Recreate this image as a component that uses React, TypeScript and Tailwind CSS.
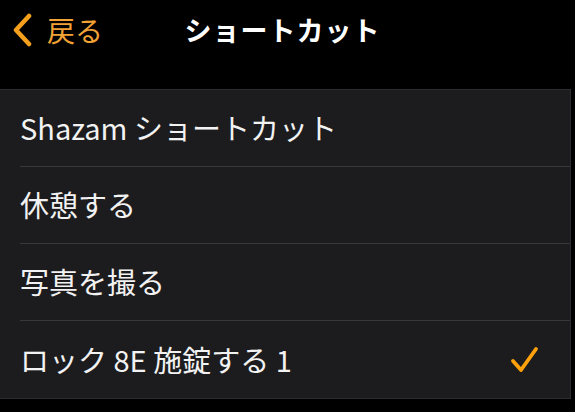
import React from 'react';

const ITEMS = [
  { id: 'shazam', label: 'Shazam ショートカット', checked: false },
  { id: 'rest', label: '休憩する', checked: false },
  { id: 'photo', label: '写真を撮る', checked: false },
  { id: 'lock', label: 'ロック 8E 施錠する 1', checked: true },
];

const FONT = "font-['Noto_Sans_CJK_JP',_'Noto_Sans',_sans-serif]";

const App: React.FC = () => {
  return (
    <div className={`w-[575px] h-[412px] bg-black overflow-hidden ${FONT}`}>
      {/* Header */}
      <div className="relative h-[89px] flex items-start pt-[12px]">
        <button className="flex items-center gap-[14px] pl-[11px] bg-transparent border-none">
          <svg width="22" height="34" viewBox="0 0 22 34" fill="none">
            <path d="M18 3 L5 17 L18 31" stroke="#f5a01c" strokeWidth="4.5" strokeLinecap="round" strokeLinejoin="round" />
          </svg>
          <span className="text-[28px] leading-[36px] text-[#f2a235]">戻る</span>
        </button>
        <h1 className="absolute left-0 right-0 top-[12px] text-center text-[27px] leading-[36px] font-bold text-white tracking-[1px] pr-[10px]">
          ショートカット
        </h1>
      </div>

      {/* List */}
      <div className="w-[571px] bg-[#1c1c1e] border-t border-[#2c2c2e] border-r border-b">
        {ITEMS.map((item, index) => (
          <div key={item.id} className="pl-[20px]">
            <div
              className={`h-[77px] flex items-center justify-between pr-[30px] ${
                index < ITEMS.length - 1 ? 'border-b border-[#38383a]' : ''
              }`}
            >
              <span className="text-[29px] text-[#f2f2f2]">{item.label}</span>
              {item.checked && (
                <svg width="30" height="28" viewBox="0 0 30 28" fill="none">
                  <path d="M3 15 L11 24 L26 3" stroke="#ffa10a" strokeWidth="3.8" strokeLinecap="round" strokeLinejoin="round" />
                </svg>
              )}
            </div>
          </div>
        ))}
      </div>
    </div>
  );
};

export default App;
